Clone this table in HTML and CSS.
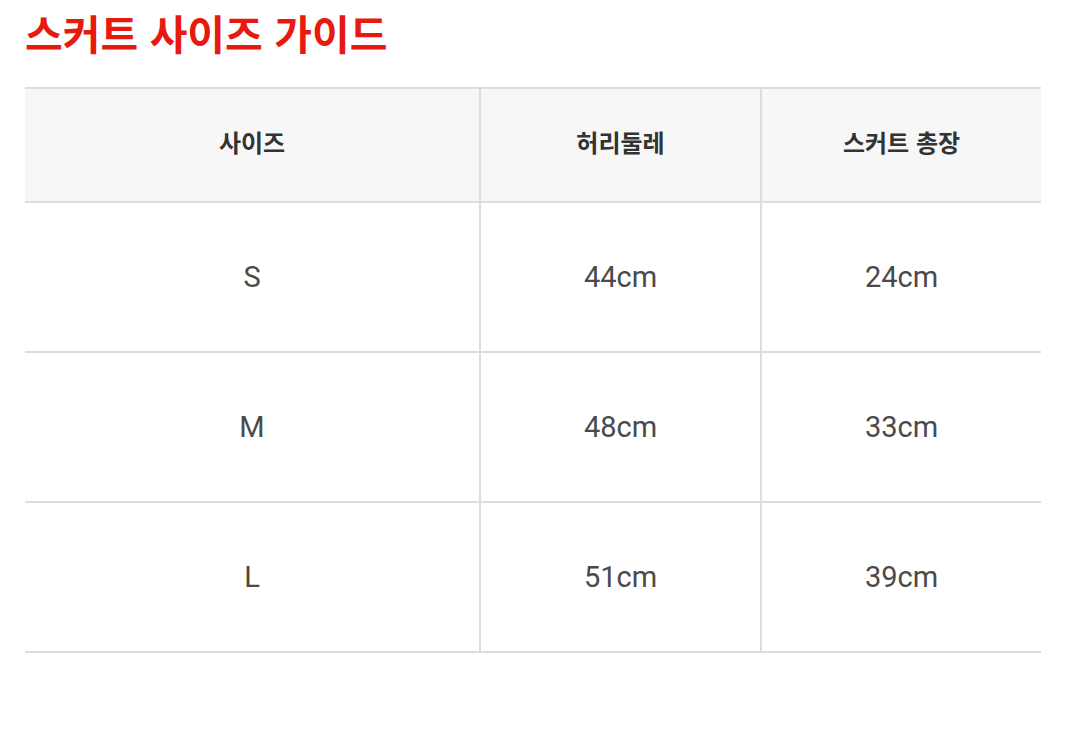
FILE: index.html
```html
<!DOCTYPE html>
<html lang="ko">
<head>
<meta charset="utf-8">
<title>스커트 사이즈 가이드</title>
<link rel="stylesheet" href="styles.css">
</head>
<body>
<div class="page">
  <h1 class="title">스커트 사이즈 가이드</h1>
  <table class="size-table">
    <colgroup>
      <col class="c1"><col class="c2"><col class="c3">
    </colgroup>
    <thead>
      <tr><th>사이즈</th><th>허리둘레</th><th>스커트 총장</th></tr>
    </thead>
    <tbody>
      <tr><td>S</td><td>44cm</td><td>24cm</td></tr>
      <tr><td>M</td><td>48cm</td><td>33cm</td></tr>
      <tr><td>L</td><td>51cm</td><td>39cm</td></tr>
    </tbody>
  </table>
</div>
</body>
</html>
```
FILE: styles.css
```css
html, body {
  margin: 0;
  padding: 0;
  background: #ffffff;
}
.page {
  padding: 0 0 0 25px;
}
.title {
  margin: 0;
  height: 87px;
  font-family: "Noto Sans CJK KR", "Noto Sans", sans-serif;
  font-weight: 700;
  font-size: 41px;
  line-height: 64px;
  color: #e8190f;
}
.size-table {
  width: 1016px;
  table-layout: fixed;
  border-collapse: separate;
  border-spacing: 0;
}
.c1 { width: 454px; }
.c2 { width: 281px; }
.c3 { width: 281px; }
.size-table th {
  height: 104px;
  padding: 0 0 8px;
  background: #f7f7f7;
  border-top: 2px solid #dddddd;
  border-bottom: 2px solid #dddddd;
  font-family: "Noto Sans CJK KR", "Noto Sans", sans-serif;
  font-weight: 700;
  font-size: 24px;
  color: #333333;
  text-align: center;
  vertical-align: middle;
}
.size-table td {
  height: 148px;
  padding: 0;
  border-bottom: 2px solid #dddddd;
  font-family: Roboto, "Noto Sans CJK KR", sans-serif;
  font-size: 29px;
  color: #4a4a4a;
  text-align: center;
  vertical-align: middle;
}
.size-table th + th,
.size-table td + td {
  border-left: 2px solid #dddddd;
}
```
